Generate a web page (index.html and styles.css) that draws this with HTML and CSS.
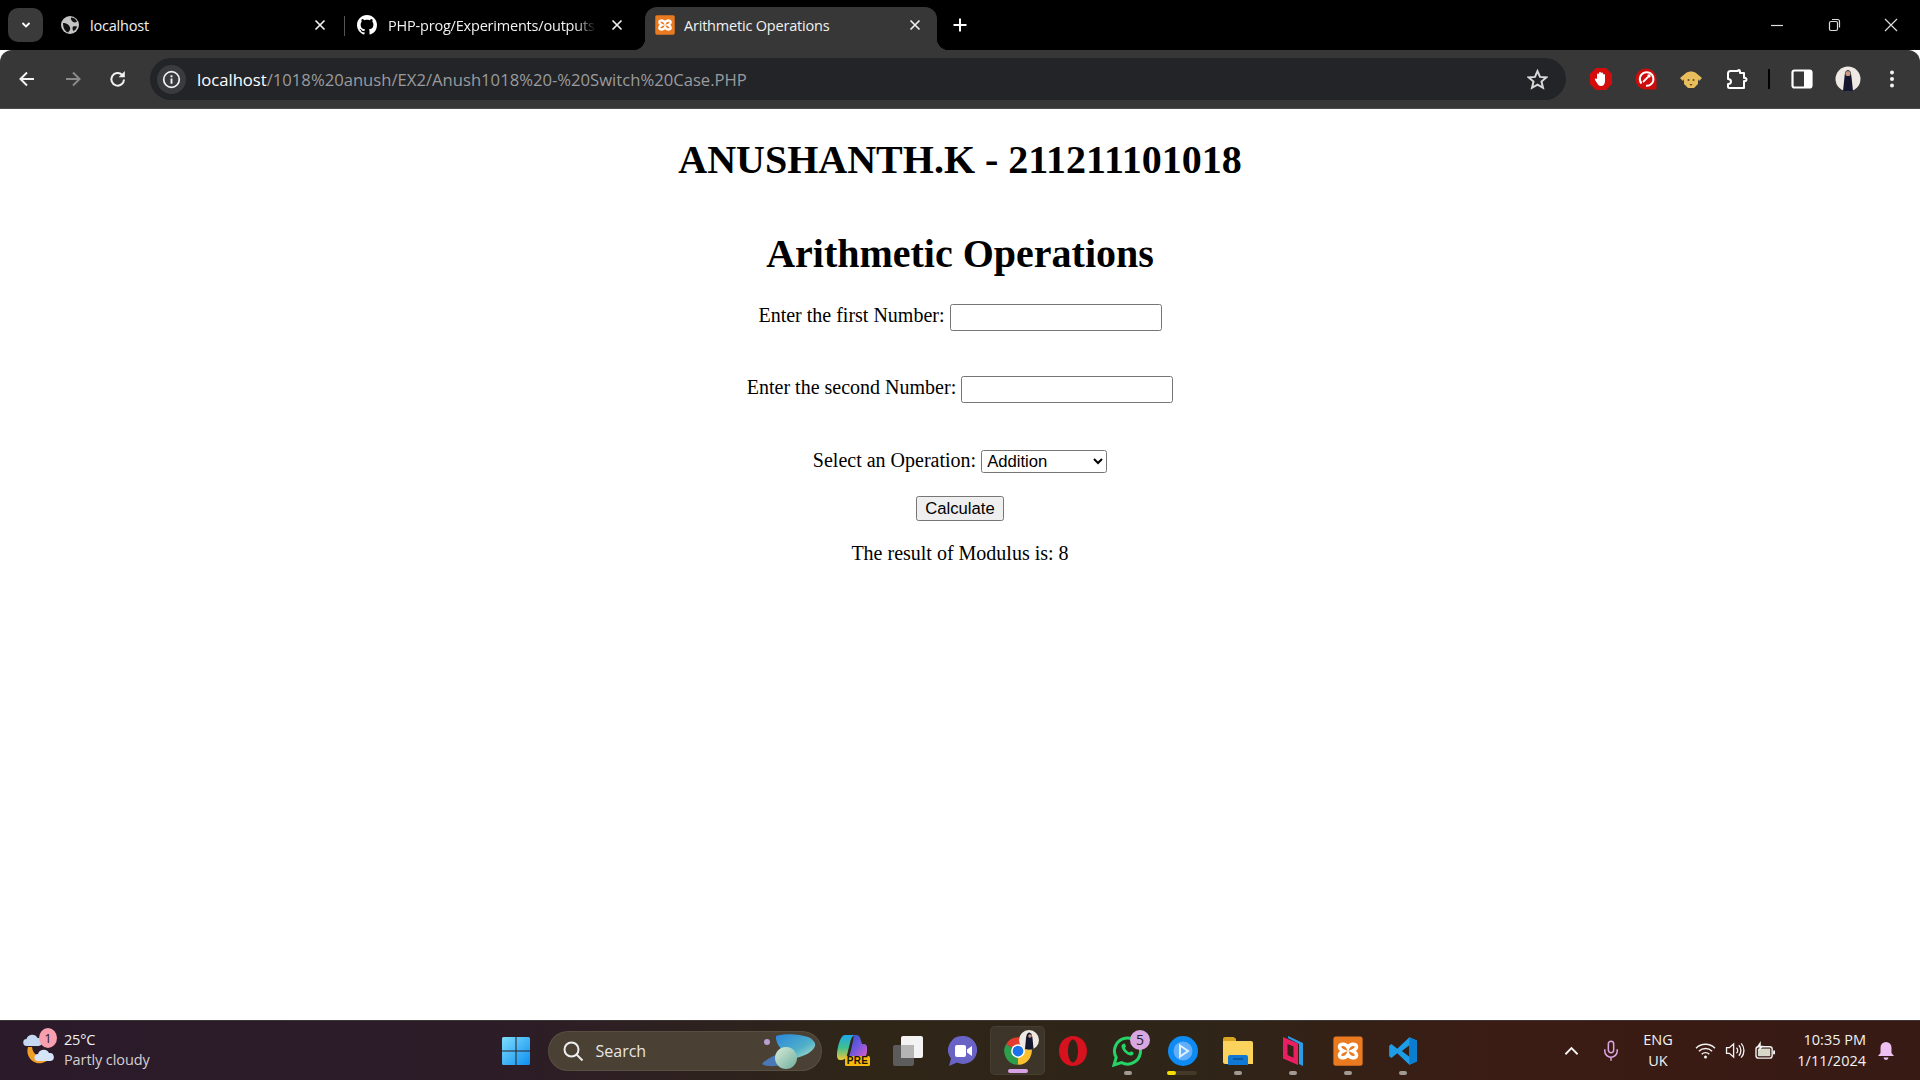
FILE: index.html
```html
<!DOCTYPE html>
<html lang="en">
<head>
<meta charset="utf-8">
<title>Arithmetic Operations</title>
<link rel="stylesheet" href="styles.css">
</head>
<body>
<svg class="sprites" aria-hidden="true">
  <symbol id="xampp" viewBox="0 0 24 24">
    <rect x="0.3" y="0.3" width="23.4" height="23.4" rx="2" fill="#ea7a20"/>
    <path d="M12 9.200C10.800 6.400 5.600 5.400 5.200 8.400 5 10.200 6.600 11.200 8.400 12 6.600 12.800 5 13.800 5.200 15.600 5.600 18.600 10.800 17.600 12 14.800 13.200 17.600 18.400 18.600 18.800 15.600 19 13.800 17.400 12.800 15.600 12 17.400 11.200 19 10.200 18.800 8.400 18.400 5.400 13.200 6.400 12 9.200Z" fill="none" stroke="#fff" stroke-width="2.800"/>
  </symbol>
  <symbol id="close" viewBox="0 0 12 12">
    <path d="M1.500 1.500l9 9M10.500 1.500l-9 9" stroke="#eee" stroke-width="1.700" fill="none"/>
  </symbol>
</svg>

<header class="browser">
  <div class="tabstrip">
    <button class="tab-menu"><svg viewBox="0 0 12 12" width="12" height="12"><path d="M2.500 4l3.500 3.500L9.500 4" fill="none" stroke="#fff" stroke-width="1.800"/></svg></button>
    <div class="tab tab-one">
      <svg class="fav" viewBox="0 0 20 20"><circle cx="10" cy="10" r="9" fill="#c4c4c4"/><path d="M11 2.500c2.500 0 5 1.500 6 4-1.500 1.500-4 1-5-.5-.7-1-1.500-2.200-1-3.500zM3 8c2 0 4 .5 5.500 2s2 3 1.500 5l-2 2.500C5 16.500 3 13 3 8zM13 11.500c1.500-.5 3-.5 4 0-.5 2-1.500 3.500-3.500 4.500-1-1.500-1.500-3-.5-4.500z" fill="#111"/></svg>
      <span class="tab-title">localhost</span>
      <svg class="tab-x"><use href="#close"/></svg>
    </div>
    <div class="tab tab-two">
      <svg class="fav" viewBox="0 0 16 16"><path fill="#fff" d="M8 0C3.580 0 0 3.580 0 8c0 3.540 2.290 6.530 5.470 7.590.4.070.55-.17.55-.38 0-.19-.01-.82-.01-1.490-2.010.37-2.530-.49-2.690-.94-.09-.23-.48-.94-.82-1.130-.28-.15-.68-.52-.01-.53.63-.01 1.080.58 1.230.82.720 1.210 1.870.87 2.330.66.070-.52.280-.87.510-1.070-1.780-.2-3.640-.89-3.640-3.950 0-.87.310-1.590.820-2.150-.08-.2-.36-1.020.08-2.120 0 0 .67-.21 2.200.82.640-.18 1.320-.27 2-.27s1.360.09 2 .27c1.530-1.040 2.200-.82 2.200-.82.440 1.100.16 1.920.08 2.120.51.560.82 1.270.82 2.150 0 3.070-1.870 3.750-3.650 3.950.29.250.54.730.54 1.480 0 1.070-.01 1.930-.01 2.200 0 .21.150.46.55.38A8.010 8.010 0 0 0 16 8c0-4.420-3.580-8-8-8Z"/></svg>
      <span class="tab-title fade">PHP-prog/Experiments/outputs</span>
      <svg class="tab-x"><use href="#close"/></svg>
    </div>
    <div class="tab tab-active">
      <svg class="fav"><use href="#xampp"/></svg>
      <span class="tab-title">Arithmetic Operations</span>
      <svg class="tab-x"><use href="#close"/></svg>
    </div>
    <svg class="new-tab" viewBox="0 0 16 16" width="16" height="16"><path d="M8 1.500v13M1.500 8h13" stroke="#fff" stroke-width="2" fill="none"/></svg>
    <div class="window-controls">
      <svg viewBox="0 0 14 14" width="14" height="14"><path d="M1 7.500h12" stroke="#ddd" stroke-width="1.200"/></svg>
      <svg viewBox="0 0 14 14" width="14" height="14"><rect x="2.500" y="3.500" width="8" height="9" rx="1.500" fill="none" stroke="#ddd" stroke-width="1.200"/><path d="M5 1.500h5.500q2 0 2 2v6" fill="none" stroke="#ddd" stroke-width="1.200"/></svg>
      <svg viewBox="0 0 14 14" width="14" height="14"><path d="M1 1l12 12M13 1L1 13" stroke="#ddd" stroke-width="1.200"/></svg>
    </div>
  </div>

  <div class="toolbar">
    <div class="nav-buttons">
      <svg viewBox="0 0 20 20" width="20" height="20"><path d="M17 10H4M10 3.500L3.500 10l6.500 6.500" fill="none" stroke="#f2f2f2" stroke-width="2"/></svg>
      <svg viewBox="0 0 20 20" width="20" height="20"><path d="M3 10h13M10 3.500l6.500 6.500-6.500 6.500" fill="none" stroke="#8a8a8a" stroke-width="2"/></svg>
      <svg viewBox="0 0 20 20" width="20" height="20"><path d="M16 10.500a6.300 6.300 0 1 1-1.800-4.600" fill="none" stroke="#f2f2f2" stroke-width="2"/><path d="M16.800 2v6.200h-6.200z" fill="#f2f2f2"/></svg>
    </div>
    <div class="omnibox">
      <span class="site-info"><svg viewBox="0 0 20 20" width="19" height="19"><circle cx="10" cy="10" r="8.200" fill="none" stroke="#f2f2f2" stroke-width="1.800"/><path d="M10 9v5.500M10 5.500v2" stroke="#f2f2f2" stroke-width="2"/></svg></span>
      <span class="url"><span class="host">localhost</span>/1018%20anush/EX2/Anush1018%20-%20Switch%20Case.PHP</span>
      <svg class="star" viewBox="0 0 20 20" width="21" height="21"><path d="M10 2l2.400 5.500 6 .5-4.600 4 1.400 5.900L10 14.800l-5.200 3.100L6.200 12 1.600 8l6-.5z" fill="none" stroke="#d8d8d8" stroke-width="1.900"/></svg>
    </div>
    <div class="extensions">
      <svg viewBox="0 0 24 24" width="24" height="24"><path d="M7 1h10l6 6v10l-6 6H7l-6-6V7z" fill="#d40c0c"/><path d="M8 12V7.500a1 1 0 0 1 2 0V6a1 1 0 0 1 2 0v.5a1 1 0 0 1 2 0V8a1 1 0 0 1 2 0v6c0 3-1.500 5-4 5-2 0-3-1-4-3l-2-3c-.6-1 .8-2 1.600-1z" fill="#fff"/></svg>
      <svg viewBox="0 0 24 24" width="24" height="24"><path d="M12 1.500a10.500 10.500 0 0 1 10.500 10.500v10.500H12a10.500 10.500 0 0 1 0-21z" fill="#cf0c0c"/><path d="M7.500 16.500a6.800 6.800 0 1 1 4.500 2.300" fill="none" stroke="#fff" stroke-width="2"/><path d="M9 15l5-5" stroke="#fff" stroke-width="1.800"/><circle cx="15" cy="9" r="1.700" fill="#fff"/></svg>
      <svg viewBox="0 0 24 24" width="24" height="24"><path d="M7 6c3-2 7-2 10 0l6 5-3 3-1-2v5l-4 4H9l-4-4v-5l-1 2-3-3z" fill="#e8bd5c"/><circle cx="9.500" cy="13" r="1" fill="#5a4a22"/><circle cx="14.500" cy="13" r="1" fill="#5a4a22"/><path d="M10.500 17h3l-1.500 2z" fill="#5a4a22"/></svg>
      <svg viewBox="0 0 24 24" width="24" height="24"><path d="M9 4h5v-.500a2 2 0 0 1 1-.5c1 .2 1 .5 1 1.500V6h4v5c1.500-.5 2.500.3 2.500 1.500S21.500 14.500 20 14v7H5.500a1.500 1.500 0 0 1-1.500-1.500V17c2 0 3-1 3-2.500S6 12 4 12V6.500A2.500 2.500 0 0 1 6.500 4z" fill="none" stroke="#fff" stroke-width="2" stroke-linejoin="round"/></svg>
      <span class="toolbar-sep"></span>
      <svg viewBox="0 0 24 24" width="24" height="24"><rect x="2.500" y="3.500" width="19" height="17" rx="2" fill="none" stroke="#fff" stroke-width="2.200"/><rect x="14" y="3.500" width="7.500" height="17" fill="#fff"/></svg>
      <svg viewBox="0 0 26 26" width="26" height="26"><circle cx="13" cy="13" r="12.500" fill="#efe9e4"/><path d="M8 25l1.500-14c.5-3 0-6 3.500-7 3.500 1 3 4 3.500 7L18 25q-5 1.500-10 0z" fill="#15172f"/><circle cx="13" cy="7.500" r="2.600" fill="#c99a82"/></svg>
      <svg class="menu-dots" viewBox="0 0 8 24" width="8" height="24"><circle cx="4" cy="5.500" r="2" fill="#f2f2f2"/><circle cx="4" cy="12" r="2" fill="#f2f2f2"/><circle cx="4" cy="18.500" r="2" fill="#f2f2f2"/></svg>
    </div>
  </div>
</header>

<main class="page">
  <h1 class="heading">ANUSHANTH.K - 211211101018</h1>
  <h2 class="heading heading-sub">Arithmetic Operations</h2>
  <form class="calc-form">
    <div class="row row-first"><label>Enter the first Number:</label> <input class="num-input" type="text"></div>
    <div class="row row-second"><label>Enter the second Number:</label> <input class="num-input" type="text"></div>
    <div class="row row-op"><label>Select an Operation:</label> <select class="op-select"><option>Addition</option></select></div>
    <div class="row row-submit"><button class="calc-button" type="button">Calculate</button></div>
    <p class="result">The result of Modulus is: 8</p>
  </form>
</main>

<footer class="taskbar">
  <div class="weather">
    <span class="weather-icon">
      <svg viewBox="0 0 38 38" width="38" height="38">
        <path d="M8 15C5 25 14 33 22 31 26 30 29 28 31 25 22 28 13 24 12 15Z" fill="#f0a028"/>
        <path d="M7 14a3.500 3.500 0 0 1-.5-7 6 6 0 0 1 11-1 4 4 0 0 1 1 8z" fill="#c5d8f2"/>
        <path d="M18 29a3.500 3.500 0 0 1 0-7 6 6 0 0 1 11-1 4 4 0 0 1 1.500 8z" fill="#d5e4f7"/>
      </svg>
      <span class="weather-badge">1</span>
    </span>
    <span class="weather-text"><span class="temp">25°C</span><span class="cond">Partly cloudy</span></span>
  </div>

  <div class="apps">
    <span class="app start">
      <svg viewBox="0 0 30 30" width="30" height="30"><defs><linearGradient id="win" x1="0" y1="0" x2="1" y2="1"><stop offset="0" stop-color="#7fdcfb"/><stop offset="1" stop-color="#0c8ff0"/></linearGradient></defs><path d="M1 2.500A1.500 1.500 0 0 1 2.500 1H14.500V14.500H1zM15.500 1H27.500A1.500 1.500 0 0 1 29 2.500V14.500H15.500zM1 15.500H14.500V29H2.500A1.500 1.500 0 0 1 1 27.500zM15.500 15.500H29V27.500A1.500 1.500 0 0 1 27.500 29H15.500z" fill="url(#win)"/></svg>
    </span>
    <div class="search">
      <svg viewBox="0 0 22 22" width="22" height="22"><circle cx="9.500" cy="9.500" r="7" fill="none" stroke="#eee" stroke-width="2"/><path d="M14.500 14.500l6 6" stroke="#eee" stroke-width="2"/></svg>
      <span class="search-label">Search</span>
      <svg class="planet" viewBox="0 0 56 36" width="56" height="36"><defs><linearGradient id="pl" x1="0" y1="0" x2="1" y2="1"><stop offset="0" stop-color="#2a86dc"/><stop offset=".6" stop-color="#4fb0c8"/><stop offset="1" stop-color="#b4e4c8"/></linearGradient><linearGradient id="pl2" x1="0" y1="0" x2="1" y2="1"><stop offset="0" stop-color="#d8ecd8"/><stop offset="1" stop-color="#6fae9e"/></linearGradient></defs><circle cx="6" cy="9" r="3" fill="#b9a0d0"/><path d="M15 3c8-3 24-2 32 1 5 2 8 6 7 9-2 6-12 11-20 12-8-2-20-12-19-22z" fill="url(#pl)"/><path d="M28 17C18 20 4 26 1 31c5 4 22 2 30-2" fill="#4a78b4"/><circle cx="25" cy="25" r="11" fill="url(#pl2)"/></svg>
    </div>
    <span class="app copilot">
      <svg class="copilot-mark" viewBox="0 0 30 28" width="30" height="28"><defs><linearGradient id="cpa" x1="0" y1="0" x2="0" y2="1"><stop offset="0" stop-color="#1fa8ea"/><stop offset=".5" stop-color="#3fbf90"/><stop offset="1" stop-color="#f0c83a"/></linearGradient><linearGradient id="cpb" x1="0" y1="0" x2="1" y2="1"><stop offset="0" stop-color="#1b52c8"/><stop offset=".55" stop-color="#7a58e0"/><stop offset="1" stop-color="#ee5cc0"/></linearGradient></defs><path d="M8 0H19C15 0 14 4 13 8L10 20C9.500 23 7 25 4 25H3C1 25 0 23 0 21 0 14 3 0 8 0Z" fill="url(#cpa)"/><path d="M17 0h2c3 0 4 2 5 6l1 3h2c2 0 3 2 3 3v4c0 5-3 9-8 9H9c2-1 3-3 4-6l3-13c.3-2 .5-5 1-6z" fill="url(#cpb)"/></svg>
      <span class="pre-badge">PRE</span>
    </span>
    <span class="app">
      <svg viewBox="0 0 32 32" width="32" height="32"><rect x="1" y="10" width="21" height="21" rx="2" fill="#5c5c5c"/><rect x="9" y="1" width="22" height="22" rx="2" fill="#f3f3f3"/><rect x="9" y="10" width="13" height="13" fill="#b5b5b5"/></svg>
    </span>
    <span class="app">
      <svg viewBox="0 0 30 32" width="30" height="32"><path d="M15 1a14 14 0 1 1-6 26.600L1 31l2-7.500A14 14 0 0 1 15 1z" fill="#6a63c6"/><rect x="7" y="10" width="11" height="12" rx="2" fill="#fff"/><path d="M19 14.500l5-3.500v10l-5-3.500z" fill="#fff"/></svg>
    </span>
    <span class="app app-active">
      <svg viewBox="0 0 24 24" width="30" height="30"><path d="M12 12L2.470 6.500A11 11 0 0 1 21.530 6.500Z" fill="#e33b2e"/><path d="M12 12L21.530 6.500A11 11 0 0 1 12 23Z" fill="#fbc02d"/><path d="M12 12L12 23A11 11 0 0 1 2.470 6.500Z" fill="#2e9e4c"/><circle cx="12" cy="12" r="5.500" fill="#fff"/><circle cx="12" cy="12" r="4.300" fill="#1a73e8"/></svg>
      <svg class="chrome-avatar" viewBox="0 0 20 20" width="20" height="20"><circle cx="10" cy="10" r="10" fill="#efe9e4"/><path d="M6 19l1-11c.5-3 1-5 3-5.500 3 .5 3 3 3.500 5.500l1 11q-4 1.500-8.500 0z" fill="#15172f"/><circle cx="11" cy="6" r="1.800" fill="#c99a82"/></svg>
      <span class="run-pill run-pink"></span>
    </span>
    <span class="app">
      <svg viewBox="0 0 30 32" width="30" height="32"><path fill-rule="evenodd" d="M15 1c8 0 14 6.500 14 15s-6 15-14 15S1 24.500 1 16 7 1 15 1zm0 3.500c-2.700 0-5 5-5 11.500s2.300 11.500 5 11.500 5-5 5-11.500-2.300-11.500-5-11.500z" fill="#d5121e"/></svg>
    </span>
    <span class="app">
      <svg viewBox="0 0 32 32" width="32" height="32"><path d="M2 30l2.200-7.500A13 13 0 1 1 9.500 27.600z" fill="none" stroke="#25d366" stroke-width="3"/><path d="M11 9c1-1 2-.5 2.500 1l.5 1.500-1 1.500c1 2 2.500 3.500 4.500 4.500l1.500-1.200 2.500 1.200c.5 1.500-.5 3-2.500 3-4.500-.5-9-5-9.500-9 0-1 .5-2 1.500-2.500z" fill="#25d366"/></svg>
      <span class="count-badge">5</span>
      <span class="run-pill"></span>
    </span>
    <span class="app">
      <svg viewBox="0 0 30 30" width="30" height="30"><circle cx="15" cy="15" r="15" fill="#0d8bf2"/><circle cx="15" cy="15" r="9.500" fill="#61aefa"/><path d="M12 9.500l8 5.500-8 5.500z" fill="none" stroke="#dff0ff" stroke-width="2"/></svg>
      <span class="run-progress"><span class="run-progress-fill"></span></span>
    </span>
    <span class="app">
      <svg viewBox="0 0 30 30" width="30" height="30"><path d="M0 3a2 2 0 0 1 2-2h8c1.500 0 2 1 3 2v3H0z" fill="#d9a520"/><path d="M0 5h28a2 2 0 0 1 2 2v21H2a2 2 0 0 1-2-2z" fill="#fbd35c"/><path d="M5 21a2 2 0 0 1 2-2h16a2 2 0 0 1 2 2v8H5z" fill="#0f78d4"/><path d="M10 23h10" stroke="#0a4f90" stroke-width="1.500"/></svg>
      <span class="run-pill"></span>
    </span>
    <span class="app">
      <svg viewBox="0 0 22 32" width="22" height="32"><path d="M6 1l15 7v23l-4-2V9L6 3z" fill="#2e9be6"/><path fill-rule="evenodd" d="M1 2l15 6.500V30L1 23.500zM5.500 9v11l6 2.700V11.500z" fill="#ea1f63"/></svg>
      <span class="run-pill"></span>
    </span>
    <span class="app">
      <svg width="30" height="30"><use href="#xampp"/></svg>
      <span class="run-pill"></span>
    </span>
    <span class="app">
      <svg viewBox="0 0 26 26" width="30" height="30"><path fill-rule="evenodd" d="M18.500 1L25 4v18l-6.500 3L8 15l-5 4-2-1.500v-9L3 7l5 4zM18.500 8L12 13l6.500 5z" fill="#1f9ce8"/><path d="M18.500 1L25 4v18l-6.500 3z" fill="#0b7dd0"/></svg>
      <span class="run-pill"></span>
    </span>
  </div>

  <div class="tray">
    <svg class="tray-chevron" viewBox="0 0 16 10" width="15" height="10"><path d="M1.500 8.500L8 2l6.500 6.500" fill="none" stroke="#f2f2f2" stroke-width="2"/></svg>
    <svg class="tray-mic" viewBox="0 0 18 24" width="16" height="22"><rect x="6" y="1" width="6" height="13" rx="3" fill="none" stroke="#dba6e6" stroke-width="1.700"/><path d="M2 10v2a7 7 0 0 0 14 0v-2M9 19v4" fill="none" stroke="#dba6e6" stroke-width="1.700"/></svg>
    <div class="lang"><span>ENG</span><span>UK</span></div>
    <svg class="tray-wifi" viewBox="0 0 22 18" width="21" height="17"><path d="M1 6.500a14 14 0 0 1 20 0M4 9.800a10 10 0 0 1 14 0M7 13a5.500 5.500 0 0 1 8 0" fill="none" stroke="#f2f2f2" stroke-width="1.500"/><circle cx="11" cy="16" r="1.600" fill="#f2f2f2"/></svg>
    <svg class="tray-sound" viewBox="0 0 22 18" width="21" height="17"><path d="M1.500 6h3L9 2v14l-4.500-4h-3z" fill="none" stroke="#f2f2f2" stroke-width="1.400"/><path d="M12 6a4 4 0 0 1 0 6M14.500 3.500a8 8 0 0 1 0 11M17 1.500a11 11 0 0 1 0 15" fill="none" stroke="#f2f2f2" stroke-width="1.400"/></svg>
    <svg class="tray-battery" viewBox="0 0 22 20" width="21" height="19"><rect x="1" y="6" width="17" height="12" rx="2.500" fill="none" stroke="#f2f2f2" stroke-width="1.500"/><rect x="3" y="8" width="13" height="8" fill="#d8d8c8"/><rect x="19" y="10" width="2" height="4" fill="#f2f2f2"/><path d="M6 0L2 6h3l-1.500 5L9 5H6z" fill="#f2f2f2"/></svg>
    <div class="clock"><span>10:35 PM</span><span>1/11/2024</span></div>
    <svg class="tray-bell" viewBox="0 0 18 20" width="18" height="20"><path d="M9 1a5.500 5.500 0 0 1 5.500 5.500V12l2.500 3H1l2.500-3V6.500A5.500 5.500 0 0 1 9 1z" fill="#eec0f2"/><path d="M6.500 16.500h5a2.500 2.500 0 0 1-5 0z" fill="#eec0f2"/></svg>
  </div>
</footer>
</body>
</html>
```

FILE: styles.css
```css
html, body {
  margin: 0;
  height: 100%;
}
body {
  display: flex;
  flex-direction: column;
  height: 1080px;
  overflow: hidden;
  background: #fff;
  font-family: "Liberation Serif", serif;
}
.sprites { display: none; }

/* tab strip */
.browser { flex: none; font-family: "Open Sans", sans-serif; color: #f1f1f1; }
.tabstrip {
  position: relative;
  display: flex;
  align-items: flex-end;
  height: 50px;
  padding-left: 8px;
  background: #000;
}
.tab-menu {
  display: flex;
  align-items: center;
  justify-content: center;
  align-self: flex-start;
  width: 35px;
  height: 34px;
  margin-top: 8px;
  margin-right: 8px;
  padding: 0;
  border: 0;
  border-radius: 10px;
  background: #3a3a3a;
}
.tab {
  position: relative;
  display: flex;
  align-items: center;
  box-sizing: border-box;
  height: 43px;
  padding-bottom: 7px;
  font-size: 14.500px;
  letter-spacing: -0.200px;
}
.tab-one { width: 293px; padding-left: 9px; gap: 10px; }
.tab-two { width: 301px; padding-left: 13px; gap: 11px; }
.tab-two::before {
  content: "";
  position: absolute;
  left: 0;
  top: 9px;
  width: 1px;
  height: 20px;
  background: #555;
}
.tab-active {
  width: 292px;
  padding-left: 10px;
  gap: 9px;
  background: #373737;
  border-radius: 12px 12px 0 0;
}
.tab-active::before,
.tab-active::after {
  content: "";
  position: absolute;
  bottom: 0;
  width: 12px;
  height: 12px;
}
.tab-active::before { left: -12px; background: radial-gradient(circle at 0 0, #000 12px, #373737 12.500px); }
.tab-active::after { right: -12px; background: radial-gradient(circle at 100% 0, #000 12px, #373737 12.500px); }
.fav { flex: none; width: 20px; height: 20px; }
.tab-title { flex: 1; min-width: 0; white-space: nowrap; overflow: hidden; }
.fade {
  -webkit-mask-image: linear-gradient(90deg, #000 90%, transparent 100%);
  mask-image: linear-gradient(90deg, #000 90%, transparent 100%);
}
.tab-x { flex: none; width: 12px; height: 12px; margin-right: 18px; margin-left: 4px; }
.tab-two .tab-x { margin-right: 22px; }
.tab-active .tab-x { margin-right: 16px; }
.new-tab { align-self: center; margin-left: 15px; }
.window-controls {
  position: absolute;
  top: 18px;
  right: 22px;
  display: flex;
  gap: 43px;
}

/* toolbar */
.toolbar {
  display: flex;
  align-items: center;
  box-sizing: border-box;
  height: 59px;
  border-radius: 12px 12px 0 0;
  background: #373737;
  border-bottom: 1px solid #4b4b4b;
}
.nav-buttons {
  display: flex;
  gap: 25.500px;
  box-sizing: border-box;
  width: 150px;
  padding-left: 17px;
}
.omnibox {
  display: flex;
  align-items: center;
  flex: none;
  box-sizing: border-box;
  width: 1416px;
  height: 42px;
  padding: 0 18px 0 7px;
  border-radius: 21px;
  background: #232427;
}
.site-info {
  display: flex;
  align-items: center;
  justify-content: center;
  width: 29px;
  height: 29px;
  border-radius: 50%;
  background: #3a3b3e;
}
.url {
  flex: 1;
  margin-left: 11px;
  font-size: 16.650px;
  color: #9a9b9e;
  white-space: nowrap;
}
.host { color: #fff; }
.extensions {
  display: flex;
  align-items: center;
  flex: 1;
  padding-left: 23px;
  gap: 21px;
}
.toolbar-sep { width: 2px; height: 20px; margin: 0 -1px 0 -1px; background: #000; }
.menu-dots { margin-left: 6px; }

/* page */
.page { flex: 1; min-height: 0; text-align: center; color: #000; font-size: 20px; }
.heading {
  margin: 27.500px 0 0;
  font-size: 40px;
  font-weight: bold;
  line-height: 46px;
}
.heading-sub { margin-top: 48.500px; margin-bottom: 27px; }
.calc-form { margin: 0; }
.row { line-height: 23px; }
.row-first { margin-bottom: 45.500px; }
.row-second { margin-bottom: 46px; }
.row-op { margin-bottom: 23px; }
.row-submit { margin-bottom: 21px; }
.num-input {
  box-sizing: border-box;
  width: 212px;
  height: 26.500px;
  padding: 1px 2px;
  border: 1.250px solid #767676;
  border-radius: 2.500px;
  background: #fff;
  font: 16.670px "Liberation Sans", sans-serif;
}
.op-select {
  box-sizing: border-box;
  width: 126px;
  height: 23px;
  padding-left: 1px;
  border: 1px solid #767676;
  border-radius: 2.500px;
  background: #fff;
  color: #000;
  font: 16.670px "Liberation Sans", sans-serif;
}
.calc-button {
  box-sizing: border-box;
  width: 88px;
  height: 25.500px;
  padding: 0;
  border: 1.250px solid #767676;
  border-radius: 2.500px;
  background: #efefef;
  color: #000;
  font: 16.670px "Liberation Sans", sans-serif;
}
.result { margin: 0; line-height: 23px; }

/* taskbar */
.taskbar {
  flex: none;
  display: flex;
  align-items: center;
  box-sizing: border-box;
  height: 60px;
  border-top: 1px solid #3c3634;
  background: linear-gradient(90deg, #2b1b2a 0%, #2c1c28 25%, #2f2618 45%, #2e2518 62%, #3b1c14 78%, #371a14 100%);
  font-family: "Open Sans", sans-serif;
  color: #f2f2f2;
}
.weather {
  display: flex;
  align-items: center;
  flex: none;
  gap: 6px;
  box-sizing: border-box;
  width: 488px;
  padding-left: 20px;
}
.weather-icon { position: relative; display: block; width: 38px; height: 38px; }
.weather-badge {
  position: absolute;
  top: -4px;
  left: 19px;
  width: 18px;
  height: 20px;
  border-radius: 50%;
  background: #f8a0b0;
  color: #2a1a20;
  font-size: 13px;
  line-height: 20px;
  text-align: center;
}
.weather-text { display: flex; flex-direction: column; padding-bottom: 2px; font-size: 14.500px; line-height: 20px; }
.temp { letter-spacing: -0.200px; }
.cond { color: #d4d0d2; letter-spacing: -0.100px; }
.apps { display: flex; align-items: center; flex: none; }
.app {
  position: relative;
  display: flex;
  align-items: center;
  justify-content: center;
  width: 55px;
  height: 50px;
}
.search {
  position: relative;
  display: flex;
  align-items: center;
  flex: none;
  box-sizing: border-box;
  width: 274px;
  height: 40px;
  margin: 0 3.500px 0 4.500px;
  padding-left: 13px;
  gap: 12px;
  border: 1px solid rgba(255,255,255,0.08);
  border-radius: 20px;
  background: #4a4034;
  font-size: 16px;
}
.search-label { color: #e8e6e2; }
.planet { position: absolute; right: 4px; top: 1px; }
.copilot-mark { margin-top: -4px; margin-right: 2px; }
.pre-badge {
  position: absolute;
  left: 20px;
  bottom: 10px;
  width: 25px;
  height: 10px;
  border-radius: 1.500px;
  background: #f7b90f;
  color: #1b1400;
  font: bold 10px/10px "Liberation Sans", sans-serif;
  letter-spacing: 0.300px;
  text-align: center;
}
.app-active {
  box-sizing: border-box;
  height: 49px;
  border-radius: 5px;
  background: rgba(255,255,255,0.07);
  border: 1px solid rgba(255,255,255,0.05);
}
.chrome-avatar { position: absolute; top: 3px; right: 5px; }
.count-badge {
  position: absolute;
  top: 4px;
  right: 5px;
  width: 20px;
  height: 20px;
  border-radius: 50%;
  background: #d8a6e0;
  color: #222;
  font-size: 14px;
  line-height: 20px;
  text-align: center;
}
.run-pill {
  position: absolute;
  bottom: 1px;
  left: 50%;
  width: 8px;
  height: 4px;
  margin-left: -4px;
  border-radius: 2px;
  background: #a09a92;
}
.run-pink { width: 20px; margin-left: -10px; bottom: 1px; background: #d8a2e6; }
.run-progress {
  position: absolute;
  bottom: 1px;
  left: 12px;
  width: 30px;
  height: 4px;
  border-radius: 2px;
  background: #453a2a;
}
.run-progress-fill { display: block; width: 9px; height: 4px; border-radius: 2px; background: #f6dc00; }
.tray { position: relative; flex: 1; align-self: stretch; display: flex; align-items: center; }
.tray-chevron { margin-left: 134px; }
.tray-mic { margin-left: 24px; }
.lang {
  display: flex;
  flex-direction: column;
  align-items: center;
  width: 40px;
  margin-left: 19px;
  font-size: 14.500px;
  line-height: 20.500px;
}
.tray-wifi { margin-left: 17px; }
.tray-sound { margin-left: 9px; }
.tray-battery { margin-left: 9px; }
.clock {
  display: flex;
  flex-direction: column;
  align-items: flex-end;
  margin-left: auto;
  font-size: 14.500px;
  line-height: 20.500px;
}
.tray-bell { margin: 0 25px 0 11px; }
```
